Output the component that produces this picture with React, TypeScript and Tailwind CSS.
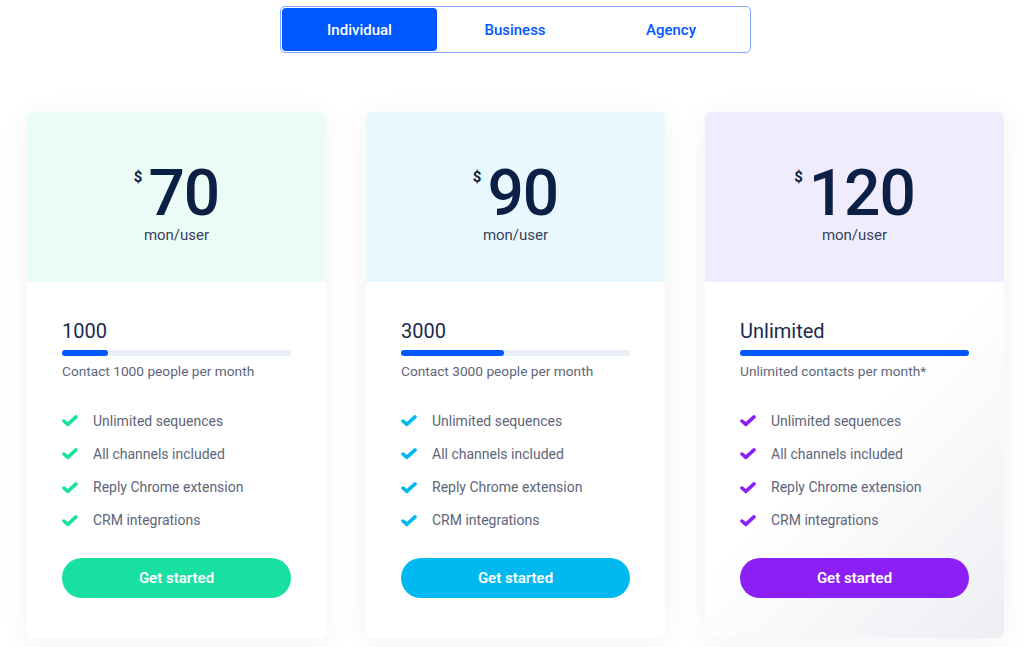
import { ReactElement } from "react";

type Plan = {
  price: string;
  limit: string;
  note: string;
  fill: string;
  top: string;
  accent: string;
  body: string;
};

const plans: Plan[] = [
  {
    price: "70",
    limit: "1000",
    note: "Contact 1000 people per month",
    fill: "w-[20%]",
    top: "bg-[#ebfcf7]",
    accent: "#17e0a1",
    body: "bg-white",
  },
  {
    price: "90",
    limit: "3000",
    note: "Contact 3000 people per month",
    fill: "w-[45%]",
    top: "bg-[#e9f8fe]",
    accent: "#00b9f1",
    body: "bg-white",
  },
  {
    price: "120",
    limit: "Unlimited",
    note: "Unlimited contacts per month*",
    fill: "w-full",
    top: "bg-[#efedfd]",
    accent: "#8c1ff5",
    body: "bg-[linear-gradient(135deg,#ffffff_45%,#eceef2_100%)]",
  },
];

const features = [
  "Unlimited sequences",
  "All channels included",
  "Reply Chrome extension",
  "CRM integrations",
];

function Check({ color }: { color: string }) {
  return (
    <svg width="16" height="12" viewBox="0 0 16 12" className="shrink-0">
      <path
        d="M2 6 L5.8 9.4 L14 1.9"
        fill="none"
        stroke={color}
        strokeWidth="3.5"
        strokeLinecap="round"
        strokeLinejoin="round"
      />
    </svg>
  );
}

function PlanCard({ plan }: { plan: Plan }): ReactElement {
  return (
    <div className="w-[299px] rounded-[6px] overflow-hidden shadow-[0_4px_30px_rgba(20,30,60,0.06)]">
      <div className={`${plan.top} h-[170px] flex flex-col items-center pt-[52px]`}>
        <div className="flex items-start">
          <span className="text-[15px] leading-none font-bold text-[#0c1f44] mt-[6px] mr-[6px]">$</span>
          <span className="text-[64px] leading-[60px] font-medium text-[#0c1f44] tracking-[-1px]">{plan.price}</span>
        </div>
        <p className="mt-[1px] text-[15px] leading-[20px] text-[#36425c]">mon/user</p>
      </div>
      <div className={`${plan.body} px-[35px] pt-[35px] pb-[40px]`}>
        <p className="text-[20px] leading-[28px] text-[#1a2b4c]">{plan.limit}</p>
        <div className="mt-[5px] h-[6px] rounded-full bg-[#e9eef8]">
          <div className={`${plan.fill} h-full rounded-full bg-[#0057ff]`} />
        </div>
        <p className="mt-[6px] text-[13.7px] leading-[18px] text-[#5d6579]">{plan.note}</p>
        <ul className="mt-[31px] flex flex-col gap-[13.3px]">
          {features.map((f) => (
            <li key={f} className="flex items-center h-[20px] text-[14px] text-[#5d6579]">
              <Check color={plan.accent} />
              <span className="ml-[15px]">{f}</span>
            </li>
          ))}
        </ul>
        <button
          type="button"
          className="mt-[27px] w-full h-[40px] rounded-full text-white text-[15px] font-semibold"
          style={{ backgroundColor: plan.accent }}
        >
          Get started
        </button>
      </div>
    </div>
  );
}

export default function App(): ReactElement {
  return (
    <div className="min-h-[647px] bg-white font-['Roboto','Liberation_Sans',sans-serif] overflow-hidden">
      <div className="ml-[27px] w-[977px] pt-[6px]">
        <div className="mx-auto w-[471px] h-[47px] flex rounded-[5px] border border-[#7fa8ff] p-[1px]">
          <button className="w-[155px] h-full rounded-[4px] bg-[#0057ff] text-white text-[15px] font-medium pt-[2px]">
            Individual
          </button>
          <button className="flex-1 h-full text-[#0057ff] text-[15px] font-medium pt-[2px]">Business</button>
          <button className="flex-1 h-full text-[#0057ff] text-[15px] font-medium pt-[2px]">Agency</button>
        </div>
        <div className="mt-[59px] flex gap-[40px]">
          {plans.map((p) => (
            <PlanCard key={p.price} plan={p} />
          ))}
        </div>
      </div>
    </div>
  );
}
